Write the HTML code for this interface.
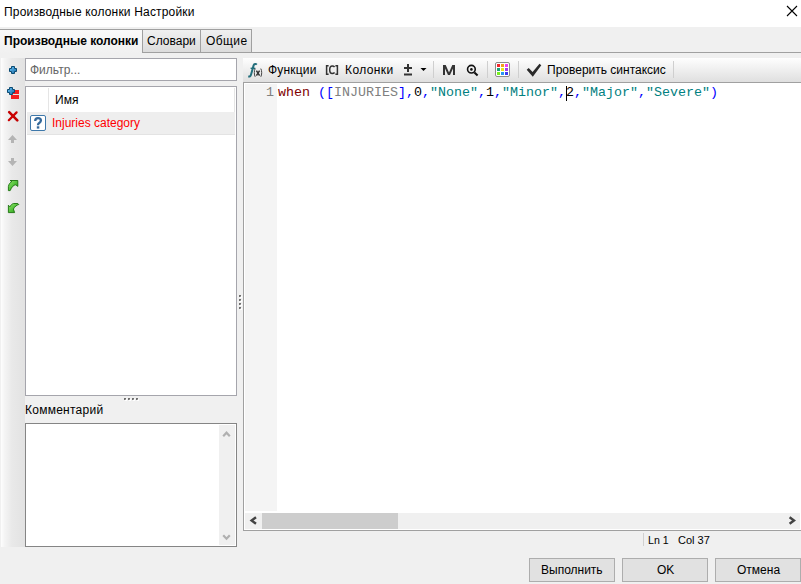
<!DOCTYPE html>
<html><head><meta charset="utf-8">
<style>
*{box-sizing:border-box;margin:0;padding:0}
html,body{width:801px;height:584px;overflow:hidden;background:#f0f0f0;font-family:"Liberation Sans",sans-serif;font-size:12px;color:#000;position:relative}
.a{position:absolute}
.t{position:absolute;white-space:pre;line-height:14px}
svg{position:absolute;overflow:visible}
</style></head><body>
<!-- title bar -->
<div class="a" style="left:0;top:0;width:801px;height:27px;background:#fff"></div>
<div class="t" style="left:4px;top:5px;letter-spacing:0.18px">Производные колонки Настройки</div>
<svg style="left:786px;top:5px" width="12" height="12"><path d="M1 1L11 11M11 1L1 11" stroke="#000" stroke-width="1.1"/></svg>

<!-- tabs -->
<div class="a" style="left:0;top:29px;width:143px;height:24px;border-top:1px solid #a0a0a0;background:linear-gradient(#fafafa,#f0f0f0)"></div>
<div class="t" style="left:4px;top:34px;font-weight:bold">Производные колонки</div>
<div class="a" style="left:142px;top:29px;width:59px;height:24px;border:1px solid #a0a0a0;background:linear-gradient(#f0f0f0,#dcdcdc)"></div>
<div class="t" style="left:147px;top:34px">Словари</div>
<div class="a" style="left:200px;top:29px;width:52px;height:24px;border:1px solid #a0a0a0;background:linear-gradient(#f0f0f0,#dcdcdc)"></div>
<div class="t" style="left:206px;top:34px;letter-spacing:0.4px">Общие</div>
<div class="a" style="left:252px;top:52px;width:549px;height:1px;background:#a0a0a0"></div>

<!-- left toolbar -->
<div class="a" style="left:1px;top:58px;width:24px;height:489px;background:linear-gradient(90deg,#fdfdfd 0,#f4f4f4 15%,#e9e9e9 45%,#e2e2e2 100%)"></div>
<svg style="left:0;top:0" width="30" height="230">
 <defs>
  <linearGradient id="bl" x1="0" y1="0" x2="1" y2="1"><stop offset="0" stop-color="#6cc8ff"/><stop offset="1" stop-color="#1466a0"/></linearGradient>
  <linearGradient id="gr" x1="0" y1="0" x2="1" y2="1"><stop offset="0" stop-color="#8ee86a"/><stop offset="1" stop-color="#1c9a0e"/></linearGradient>
 </defs>
 <path d="M11.5 66.5h3v2h2v3h-2v2h-3v-2h-2v-3h2z" fill="url(#bl)" stroke="#0a4a72" stroke-width="1"/>
 <rect x="13" y="90" width="6" height="4" fill="#f42020"/>
 <rect x="11" y="95" width="8" height="4" fill="#f42020"/>
 <path d="M9.5 87.5h3v2h2v3h-2v2h-3v-2h-2v-3h2z" fill="url(#bl)" stroke="#0a4a72" stroke-width="1"/>
 <path d="M9.2 112.2L17.3 120.3" stroke="#c40000" stroke-width="2.6" stroke-linecap="round"/><path d="M16.6 112.4L8.8 120.2" stroke="#cc0000" stroke-width="2.2" stroke-linecap="round"/>
 <path d="M8 140L12.5 135L17 140H14V143H11V140Z" fill="#b4b4b4"/>
 <path d="M8 161L12.5 166L17 161H14V158H11V161Z" fill="#b4b4b4"/>
 <path d="M10 180.5H17.8V186.4L15.8 184.8C13.5 185 11.6 187 10.2 190.6H8.4V186.5C8.8 184 10.2 182.5 12 181.3Z" fill="url(#gr)" stroke="#1a700c" stroke-width="0.9" stroke-linejoin="round"/>
 <path d="M8.4 205.2L9.9 206.8C10.8 205 12 203.9 13.5 203.5H17.8L18.8 204.5C16.8 205 14.8 206.5 13.4 209L14.6 212.6H8.4Z" fill="url(#gr)" stroke="#1a700c" stroke-width="0.9" stroke-linejoin="round"/>
</svg>

<!-- filter -->
<div class="a" style="left:25px;top:58px;width:212px;height:23px;border:1px solid #a5a5ac;background:#fff"></div>
<div class="t" style="left:30px;top:63px;color:#666">Фильтр...</div>

<!-- list -->
<div class="a" style="left:25px;top:86px;width:212px;height:310px;border:1px solid #a5a5ac;background:#fff"></div>
<div class="a" style="left:48px;top:88px;width:1px;height:24px;background:#e5e5e5"></div>
<div class="a" style="left:234px;top:88px;width:1px;height:24px;background:#e5e5e5"></div>
<div class="t" style="left:55px;top:93px">Имя</div>
<div class="a" style="left:27px;top:112px;width:208px;height:23px;background:#eeeeee;border-bottom:1px solid #e3e3e3"></div>
<div class="a" style="left:30px;top:115px;width:16px;height:16px;border:1.5px solid #3e78aa;border-radius:2px;background:#fff"></div>
<svg style="left:0;top:0" width="1" height="1"><path d="M35.2 121C35.2 119 36.4 118.2 38 118.2C39.8 118.2 40.9 119.2 40.9 120.6C40.9 122 39.9 122.5 39 123.1C38.3 123.6 38 124 38 125.2" fill="none" stroke="#35699b" stroke-width="2.3"/><rect x="36.8" y="126.3" width="2.5" height="2.3" fill="#35699b"/></svg>
<div class="t" style="left:52px;top:116px;color:#ff0000">Injuries category</div>

<!-- splitter dots -->
<svg style="left:0;top:0" width="1" height="1"><rect x="125" y="399" width="2" height="2" fill="#fff"/><rect x="124" y="398" width="2" height="2" fill="#6e6e6e"/><rect x="125" y="399" width="1" height="1" fill="#9a9a9a"/><rect x="129" y="399" width="2" height="2" fill="#fff"/><rect x="128" y="398" width="2" height="2" fill="#6e6e6e"/><rect x="129" y="399" width="1" height="1" fill="#9a9a9a"/><rect x="133" y="399" width="2" height="2" fill="#fff"/><rect x="132" y="398" width="2" height="2" fill="#6e6e6e"/><rect x="133" y="399" width="1" height="1" fill="#9a9a9a"/><rect x="137" y="399" width="2" height="2" fill="#fff"/><rect x="136" y="398" width="2" height="2" fill="#6e6e6e"/><rect x="137" y="399" width="1" height="1" fill="#9a9a9a"/></svg>

<div class="t" style="left:25px;top:403px;letter-spacing:0.25px">Комментарий</div>
<div class="a" style="left:25px;top:423px;width:212px;height:124px;border:1px solid #858585;background:#fff"></div>
<div class="a" style="left:219px;top:425px;width:16px;height:120px;background:#f0f0f0"></div>
<svg style="left:0;top:0" width="1" height="1">
 <path d="M223.2 436.2L226.5 432.7L229.8 436.2" fill="none" stroke="#b0b0b0" stroke-width="2.2"/>
 <path d="M223.2 535.2L226.5 538.7L229.8 535.2" fill="none" stroke="#b0b0b0" stroke-width="2.2"/>
</svg>

<!-- vertical splitter -->
<svg style="left:0;top:0" width="1" height="1"><rect x="240" y="296" width="2" height="2" fill="#fff"/><rect x="239" y="295" width="2" height="2" fill="#6e6e6e"/><rect x="240" y="296" width="1" height="1" fill="#9a9a9a"/><rect x="240" y="300" width="2" height="2" fill="#fff"/><rect x="239" y="299" width="2" height="2" fill="#6e6e6e"/><rect x="240" y="300" width="1" height="1" fill="#9a9a9a"/><rect x="240" y="304" width="2" height="2" fill="#fff"/><rect x="239" y="303" width="2" height="2" fill="#6e6e6e"/><rect x="240" y="304" width="1" height="1" fill="#9a9a9a"/><rect x="240" y="308" width="2" height="2" fill="#fff"/><rect x="239" y="307" width="2" height="2" fill="#6e6e6e"/><rect x="240" y="308" width="1" height="1" fill="#9a9a9a"/></svg>

<!-- editor toolbar -->
<div class="a" style="left:243px;top:58px;width:558px;height:25px;background:linear-gradient(#fefefe,#dedede)"></div>
<svg style="left:0;top:0" width="1" height="1">
 <path d="M256.8 64.6C256 63.8 254.2 63.6 253.6 65.4L251 74.8C250.6 76.3 249.6 76.8 248.3 76.3" fill="none" stroke="#236f7c" stroke-width="2"/>
 <path d="M250.6 68.3H255.2" stroke="#236f7c" stroke-width="1.4"/>
 <path d="M255.2 68.6C254 70.5 254 74.8 255.2 76.8M260.8 68.6C262 70.5 262 74.8 260.8 76.8" fill="none" stroke="#444" stroke-width="1"/>
 <path d="M256.4 70.6L259.6 75.6M259.6 70.6L256.4 75.6" stroke="#333" stroke-width="1.5"/>
</svg>
<div class="t" style="left:268px;top:63px;letter-spacing:0.2px">Функции</div>
<svg style="left:0;top:0" width="1" height="1">
 <path d="M328.6 65.8H326.6V74.2H328.6M335.4 65.8H337.4V74.2H335.4" fill="none" stroke="#333" stroke-width="1.5"/>
 <path d="M334.6 67C334 66.2 333.2 65.9 332.2 65.9C330.4 65.9 329.7 67.8 329.7 69.8C329.7 71.8 330.4 73.6 332.2 73.6C333.2 73.6 334 73.3 334.6 72.6" fill="none" stroke="#333" stroke-width="1.5"/>
</svg>
<div class="t" style="left:345px;top:63px;letter-spacing:0.4px">Колонки</div>
<svg style="left:0;top:0" width="1" height="1">
 <path d="M404 68H412M408 64V72M404 74.5H412" stroke="#333" stroke-width="2"/>
 <path d="M420.5 68H426.5L423.5 71Z" fill="#000"/>
 <rect x="433" y="61" width="1" height="17" fill="#cfcfcf"/>
 <rect x="487" y="61" width="1" height="17" fill="#cfcfcf"/>
 <circle cx="471.4" cy="69.2" r="3.85" fill="none" stroke="#111" stroke-width="1.6"/>
 <circle cx="471.4" cy="69.4" r="1.3" fill="#111"/>
 <path d="M474.4 72.6L477.6 75.6" stroke="#111" stroke-width="2.1"/>
 <rect x="495.5" y="62.5" width="14" height="14" rx="1.5" fill="#fff" stroke="#8a8a8a"/>
 <rect x="497" y="64" width="3" height="3" fill="#f2282d"/><rect x="501" y="64" width="3" height="3" fill="#f0a01e"/><rect x="505" y="64" width="3" height="3" fill="#f03cf0"/>
 <rect x="497" y="68" width="3" height="3" fill="#1ea078"/><rect x="501" y="68" width="3" height="3" fill="#e6e61e"/><rect x="505" y="68" width="3" height="3" fill="#a03cf0"/>
 <rect x="497" y="72" width="3" height="3" fill="#78f01e"/><rect x="501" y="72" width="3" height="3" fill="#2896f0"/><rect x="505" y="72" width="3" height="3" fill="#3c3cf0"/>
 <rect x="518" y="61" width="1" height="17" fill="#cfcfcf"/>
 <path d="M526.7 69.8L528.7 67.9L532.6 72L539.5 63.8L541.3 65.3L532.8 76.7Z" fill="#2a2a2a"/>
 <rect x="673" y="61" width="1" height="17" fill="#cfcfcf"/>
</svg>
<svg style="left:0;top:0" width="1" height="1"><path d="M443 75V65H445.7L449 72.4L452.3 65H455V75H453V68.6L450 75H448L445 68.6V75Z" fill="#333"/></svg>
<div class="t" style="left:547px;top:63px">Проверить синтаксис</div>

<!-- editor -->
<div class="a" style="left:243px;top:82px;width:558px;height:449px;border:1px solid #a0a0a0;border-right:none;background:#fff"></div>
<div class="a" style="left:245px;top:84px;width:32px;height:427px;background:#f4f4f4"></div>
<div class="t" style="left:266px;top:86px;font-family:'Liberation Mono',monospace;font-size:13.33px;color:#808080">1</div>
<div class="t" style="left:278px;top:86px;font-family:'Liberation Mono',monospace;font-size:13.33px"><span style="color:#800000">when</span> <span style="color:#0000ff">([</span><span style="color:#808080">INJURIES</span><span style="color:#0000ff">],</span>0<span style="color:#0000ff">,</span><span style="color:#008080">"None"</span><span style="color:#0000ff">,</span>1<span style="color:#0000ff">,</span><span style="color:#008080">"Minor"</span><span style="color:#0000ff">,</span>2<span style="color:#0000ff">,</span><span style="color:#008080">"Major"</span><span style="color:#0000ff">,</span><span style="color:#008080">"Severe"</span><span style="color:#0000ff">)</span></div>
<div class="a" style="left:566px;top:86px;width:1px;height:15px;background:#000"></div>
<div class="a" style="left:245px;top:513px;width:555px;height:16px;background:#f0f0f0"></div>
<div class="a" style="left:262px;top:513px;width:136px;height:16px;background:#cdcdcd"></div>
<svg style="left:0;top:0" width="1" height="1">
 <path d="M256 517.2L251.6 520.5L256 523.8" fill="none" stroke="#444" stroke-width="2.4"/>
 <path d="M789.6 517.2L794 520.5L789.6 523.8" fill="none" stroke="#444" stroke-width="2.4"/>
</svg>

<!-- status -->
<div class="a" style="left:643px;top:533px;width:1px;height:13px;background:#d0d0d0"></div>
<div class="t" style="left:648px;top:533px;font-size:10.6px">Ln 1</div><div class="t" style="left:678px;top:533px;font-size:11px">Col 37</div>

<!-- buttons -->
<div class="a" style="left:529px;top:558px;width:86px;height:24px;border:1px solid #adadad;background:#e1e1e1"></div>
<div class="t" style="left:541px;top:563px">Выполнить</div>
<div class="a" style="left:622px;top:558px;width:86px;height:24px;border:1px solid #adadad;background:#e1e1e1"></div>
<div class="t" style="left:657px;top:563px">OK</div>
<div class="a" style="left:715px;top:558px;width:86px;height:24px;border:1px solid #adadad;background:#e1e1e1"></div>
<div class="t" style="left:737px;top:563px">Отмена</div>
</body></html>
